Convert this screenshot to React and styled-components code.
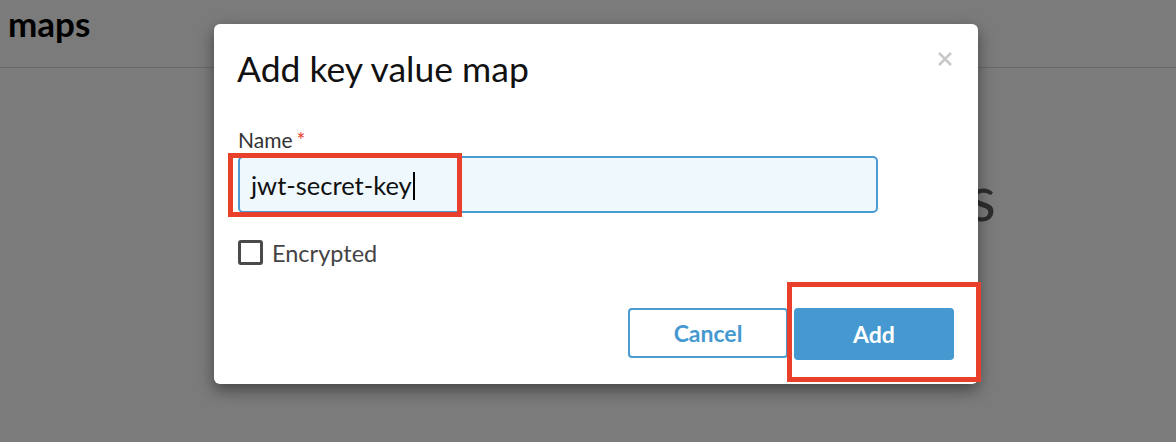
import React from "react";
import styled, { createGlobalStyle } from "styled-components";

const Global = createGlobalStyle`
  html, body { margin: 0; padding: 0; }
  body {
    width: 1176px;
    height: 442px;
    overflow: hidden;
    background: #fff;
    font-family: Lato, "Open Sans", "Liberation Sans", sans-serif;
  }
`;

const Page = styled.div`
  position: relative;
  width: 1176px;
  height: 442px;
  overflow: hidden;
  background: #fff;
`;

const Header = styled.header`
  height: 68px;
  border-bottom: 1px solid #dcdcdc;
  padding: 0 8px;
  box-sizing: border-box;
  display: flex;
  align-items: flex-start;
`;

const PageTitle = styled.h1`
  margin: 0;
  font-size: 35px;
  font-weight: 700;
  line-height: 46px;
  color: #000;
`;

const Body = styled.main`
  padding: 98px 0 0 577px;
`;

const EmptyText = styled.div`
  font-size: 62px;
  font-weight: 400;
  color: #5e5e5e;
  line-height: 1;
  white-space: nowrap;
`;

const Overlay = styled.div`
  position: absolute;
  inset: 0;
  background: rgba(0, 0, 0, 0.518);
`;

const Modal = styled.div`
  position: absolute;
  left: 214px;
  top: 24px;
  width: 764px;
  box-sizing: border-box;
  background: #fff;
  border-radius: 6px;
  box-shadow: 0 6px 16px rgba(0, 0, 0, 0.45);
  padding: 25px 24px 24px 23px;
  display: flex;
  flex-direction: column;
`;

const ModalHead = styled.div`
  display: flex;
  justify-content: space-between;
  align-items: flex-start;
`;

const ModalTitle = styled.h2`
  margin: 0;
  font-size: 35.5px;
  font-weight: 400;
  line-height: 40px;
  color: #111;
`;

const Close = styled.button`
  border: 0;
  background: none;
  padding: 0;
  margin: 3px 2px 0 0;
  width: 14px;
  height: 14px;
  display: flex;
  cursor: pointer;
`;

const Field = styled.div`
  margin-top: 40px;
  display: flex;
  flex-direction: column;
  gap: 5px;
  padding-left: 1px;
`;

const Label = styled.label`
  font-size: 21px;
  line-height: 22px;
  color: #333;
`;

const Req = styled.span`
  color: #e8432a;
  margin-left: 4px;
`;

const InputWrap = styled.div`
  position: relative;
  width: 640px;
`;

const Input = styled.div`
  height: 57px;
  box-sizing: border-box;
  border: 2px solid #4a9bd1;
  border-radius: 5px;
  background: #eef8fd;
  padding: 0 0 0 11px;
  display: flex;
  align-items: center;
  font-size: 25.5px;
  color: #111;
`;

const Caret = styled.span`
  display: inline-block;
  width: 2px;
  height: 28px;
  background: #000;
  margin-left: 1px;
  margin-top: 2px;
`;

const Highlight = styled.div`
  position: absolute;
  border: 5px solid #e8402a;
  box-sizing: border-box;
  pointer-events: none;
  left: ${(p) => p.$l}px;
  top: ${(p) => p.$t}px;
  width: ${(p) => p.$w}px;
  height: ${(p) => p.$h}px;
`;

const CheckRow = styled.label`
  margin-top: 27px;
  padding-left: 1px;
  display: flex;
  align-items: center;
  gap: 9px;
  font-size: 23.5px;
  color: #444;
  height: 25px;
`;

const Box = styled.span`
  width: 25px;
  height: 25px;
  box-sizing: border-box;
  border: 3px solid #4a4a4a;
  border-radius: 3px;
  background: #fff;
`;

const Actions = styled.div`
  margin-top: 43px;
  display: flex;
  justify-content: flex-end;
  gap: 6px;
`;

const Btn = styled.button`
  position: relative;
  width: 160px;
  height: ${(p) => (p.$primary ? 52 : 50)}px;
  box-sizing: border-box;
  border-radius: 4px;
  font-family: Lato, "Open Sans", "Liberation Sans", sans-serif;
  font-size: 23px;
  font-weight: 700;
  cursor: pointer;
  border: ${(p) => (p.$primary ? "none" : "2px solid #4a9bd1")};
  background: ${(p) => (p.$primary ? "#4599d0" : "#fff")};
  color: ${(p) => (p.$primary ? "#fff" : "#4599d0")};
`;

const AddWrap = styled.div`
  position: relative;
`;

export default function App() {
  return (
    <Page>
      <Global />
      <Header>
        <PageTitle>maps</PageTitle>
      </Header>
      <Body>
        <EmptyText>Key value maps</EmptyText>
      </Body>
      <Overlay />
      <Modal>
        <ModalHead>
          <ModalTitle>Add key value map</ModalTitle>
          <Close aria-label="Close">
            <svg width="14" height="14" viewBox="0 0 14 14">
              <path d="M1 1L13 13M13 1L1 13" stroke="#c9c9c9" strokeWidth="2.6" />
            </svg>
          </Close>
        </ModalHead>
        <Field>
          <Label>
            Name<Req>*</Req>
          </Label>
          <InputWrap>
            <Input>
              jwt-secret-key
              <Caret />
            </Input>
            <Highlight $l={-10} $t={-3} $w={234} $h={64} />
          </InputWrap>
        </Field>
        <CheckRow>
          <Box />
          Encrypted
        </CheckRow>
        <Actions>
          <Btn>Cancel</Btn>
          <AddWrap>
            <Btn $primary>Add</Btn>
            <Highlight $l={-7} $t={-26} $w={194} $h={100} />
          </AddWrap>
        </Actions>
      </Modal>
    </Page>
  );
}
